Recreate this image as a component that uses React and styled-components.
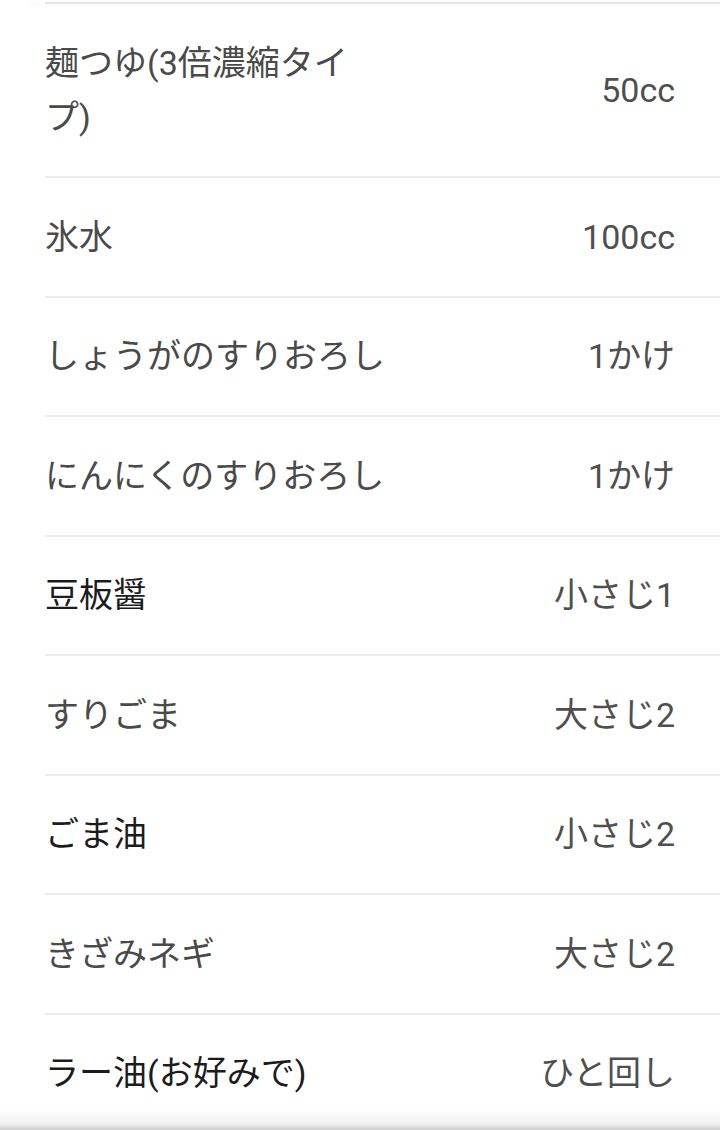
import React from 'react';
import styled, { createGlobalStyle } from 'styled-components';

const GlobalStyle = createGlobalStyle`
  html, body {
    margin: 0;
    padding: 0;
    background: #fff;
    overflow: hidden;
  }
  body {
    font-family: Roboto, "Noto Sans CJK JP", "Noto Sans", sans-serif;
    -webkit-font-smoothing: antialiased;
  }
`;

const items = [
  { name: '麺つゆ(3倍濃縮タイプ)', amount: '50cc' },
  { name: '氷水', amount: '100cc' },
  { name: 'しょうがのすりおろし', amount: '1かけ' },
  { name: 'にんにくのすりおろし', amount: '1かけ' },
  { name: '豆板醤', amount: '小さじ1', dark: true },
  { name: 'すりごま', amount: '大さじ2' },
  { name: 'ごま油', amount: '小さじ2', dark: true },
  { name: 'きざみネギ', amount: '大さじ2' },
  { name: 'ラー油(お好みで)', amount: 'ひと回し', dark: true },
];

export default function App() {
  return (
    <Page>
      <GlobalStyle />
      <TopEdge />
      <List>
        {items.map((item, i) => (
          <Row key={i} $last={i === items.length - 1}>
            <Name $dark={item.dark}>{item.name}</Name>
            <Amount>{item.amount}</Amount>
          </Row>
        ))}
      </List>
      <BottomShade />
    </Page>
  );
}

const Page = styled.div`
  width: 720px;
  height: 1130px;
  background: #fff;
`;

const TopEdge = styled.div`
  height: 2px;
  margin-top: 2px;
  margin-left: 45px;
  background: #e6e6e6;
  box-shadow: -20px 1px 6px rgba(0, 0, 0, 0.04);
`;

const List = styled.ul`
  list-style: none;
  margin: 0;
  padding: 0;
`;

const Row = styled.li`
  display: flex;
  align-items: center;
  justify-content: space-between;
  margin-left: 45px;
  padding: 31.5px 45px 31.5px 0;
  border-bottom: ${p => (p.$last ? 'none' : '2px solid #ebebeb')};
  font-size: 34px;
  line-height: 54.5px;
`;

const Name = styled.span`
  flex: 0 0 55%;
  color: ${p => (p.$dark ? '#1c1c1c' : '#4a4a4a')};
`;

const Amount = styled.span`
  color: #4f4f4f;
  text-align: right;
  white-space: nowrap;
`;

const BottomShade = styled.div`
  position: fixed;
  left: 0;
  right: 0;
  bottom: 0;
  height: 20px;
  background: linear-gradient(to bottom, rgba(0, 0, 0, 0), rgba(0, 0, 0, 0.06) 70%, rgba(0, 0, 0, 0.2));
  pointer-events: none;
`;
